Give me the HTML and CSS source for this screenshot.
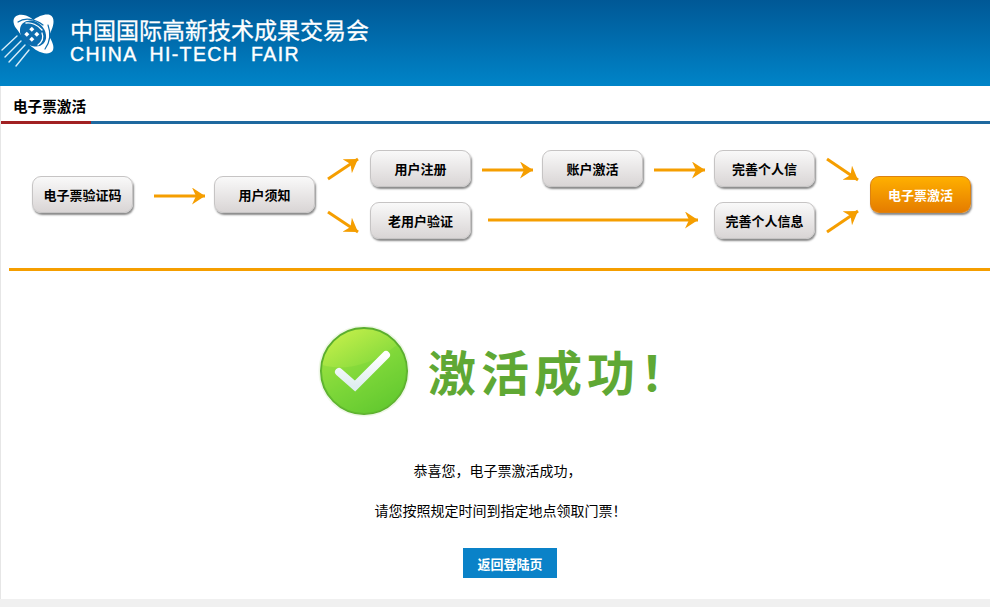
FILE: index.html
```html
<!DOCTYPE html>
<html lang="zh-CN">
<head>
<meta charset="utf-8">
<title>电子票激活</title>
<link rel="stylesheet" href="styles.css">
</head>
<body>
<header class="header">
  <svg class="logo" viewBox="0 0 66 70" width="66" height="70" aria-hidden="true">
    <path fill="#fff" d="M13.500 22C13 15 20 13.500 26 15.500 29 16.500 31.500 18.500 33.500 20 38 16.500 45 13.500 50 15 55 17 54 25 51.500 30 50.500 32.500 49.500 34.500 49 36 52 41 55 47 52.500 51 49.500 55 42 53.500 37 50.500 35 49.500 33.500 48 32 47L25 41 17.500 30C15 27.500 14 25 13.500 22Z"/>
    <ellipse cx="33" cy="33.500" rx="14.500" ry="11.500" transform="rotate(45 33 33.500)" fill="#0b6cae"/>
    <g fill="none" stroke="#0b6cae" stroke-linecap="round">
      <path stroke-width="1.200" d="M18 22C25 17 35 19 43 25"/>
      <path stroke-width="1.200" d="M48 25C51 33 50 42 45 49"/>
    </g>
    <g fill="none" stroke="#fff" stroke-linecap="round">
      <path stroke-width="1.300" d="M26 23C31 22 38 25 42 30"/>
      <path stroke-width="1.300" d="M42 33C44 38 42 42 38 45"/>
    </g>
    <g fill="#fff">
      <rect x="30" y="27.500" width="3.600" height="3.600" transform="rotate(45 31.800 29.300)"/>
      <rect x="30" y="37.500" width="3.600" height="3.600" transform="rotate(45 31.800 39.300)"/>
      <rect x="25" y="32.500" width="3.600" height="3.600" transform="rotate(45 26.800 34.300)"/>
      <rect x="35" y="32.500" width="3.600" height="3.600" transform="rotate(45 36.800 34.300)"/>
    </g>
    <g fill="none" stroke="#d5ecf8" stroke-width="1.400" stroke-linecap="round">
      <path d="M2 50 17 36"/>
      <path d="M5 57 21 41"/>
      <path d="M9 62 25 45"/>
      <path d="M16 66 29 50"/>
    </g>
  </svg>
  <div class="brand">
    <div class="brand-cn">中国国际高新技术成果交易会</div>
    <div class="brand-en">CHINA HI-TECH FAIR</div>
  </div>
</header>
<main class="main">
  <div class="tabs"><div class="tab">电子票激活</div></div>
  <section class="flow">
    <svg class="arrows" viewBox="0 0 989 144" width="989" height="144" aria-hidden="true">
      <defs>
        <marker id="head" markerUnits="userSpaceOnUse" markerWidth="14" markerHeight="18" refX="13" refY="8.500" orient="auto">
          <path d="M0 0 13 8.500 0 17 4 8.500z" fill="#f59e00"/>
        </marker>
      </defs>
      <g fill="none" stroke="#f59e00" stroke-width="3" marker-end="url(#head)">
        <path d="M153 72H204"/>
        <path d="M327 55 357 35"/>
        <path d="M327 88 357 108"/>
        <path d="M481 46H532"/>
        <path d="M653 46H704"/>
        <path d="M487 96H697"/>
        <path d="M826 35 857 56"/>
        <path d="M826 108 857 87"/>
      </g>
    </svg>
    <div class="node n1">电子票验证码</div>
    <div class="node n2">用户须知</div>
    <div class="node n3">用户注册</div>
    <div class="node n4">老用户验证</div>
    <div class="node n5">账户激活</div>
    <div class="node n6">完善个人信</div>
    <div class="node n7">完善个人信息</div>
    <div class="node n8 node-active">电子票激活</div>
  </section>
  <hr class="divider">
  <section class="result">
    <div class="hero">
      <svg class="check" viewBox="0 0 92 92" width="92" height="92" aria-hidden="true">
        <defs>
          <linearGradient id="disc" x1="0.150" y1="0.050" x2="0.700" y2="1">
            <stop offset="0" stop-color="#c4ef4a"/>
            <stop offset="0.550" stop-color="#84da3c"/>
            <stop offset="1" stop-color="#5cc42e"/>
          </linearGradient>
          <linearGradient id="mark" x1="0" y1="0" x2="0" y2="1">
            <stop offset="0" stop-color="#ffffff"/>
            <stop offset="1" stop-color="#dfeef0"/>
          </linearGradient>
        </defs>
        <circle cx="46" cy="46" r="45.500" fill="#eef7e6"/>
        <circle cx="46" cy="46" r="43" fill="url(#disc)" stroke="#5bae2e" stroke-width="2"/>
        <path d="M4 40C24 46 52 42 79 20 86 29 89 38 89 46 89 70 70 89 46 89 22 89 3 70 3 46Z" fill="#6fd034" opacity="0.350"/>
        <path d="M21 47 37 61 68 30" fill="none" stroke="url(#mark)" stroke-width="8" stroke-linecap="round" stroke-linejoin="miter"/>
      </svg>
      <h1 class="hero-title">激活成功！</h1>
    </div>
    <p class="msg msg-first">恭喜您，电子票激活成功，</p>
    <p class="msg msg-second">请您按照规定时间到指定地点领取门票！</p>
    <a class="back" href="#">返回登陆页</a>
  </section>
</main>
</body>
</html>
```
FILE: styles.css
```css
* { box-sizing: border-box; }
html, body { margin: 0; padding: 0; }
body {
  width: 990px;
  height: 607px;
  overflow: hidden;
  background: #f0f0f0;
  font-family: "Noto Sans CJK SC", "Liberation Sans", sans-serif;
  color: #000;
}
.header {
  height: 86px;
  display: flex;
  align-items: flex-start;
  background: linear-gradient(#005896, #0084c8);
}
.logo { flex: none; margin-right: 4px; display: block; }
.brand { padding-top: 15px; color: #fff; }
.brand-cn {
  font-size: 23px;
  line-height: 28px;
  white-space: nowrap;
  -webkit-text-stroke: 0.3px #fff;
}
.brand-en {
  font-family: "Liberation Sans", sans-serif;
  font-size: 19.500px;
  line-height: 22px;
  letter-spacing: 1.400px;
  word-spacing: 6px;
  white-space: nowrap;
  -webkit-text-stroke: 0.4px #fff;
}
.main {
  height: 513px;
  background: #fff;
  border-left: 1px solid #e6e6e6;
}
.tabs { height: 38px; border-bottom: 3px solid #1e689f; }
.tab {
  width: 90px;
  height: 38px;
  padding: 8px 0 0 12px;
  border-bottom: 3px solid #a12022;
  font-size: 14.600px;
  line-height: 24px;
  font-weight: 700;
  white-space: nowrap;
}
.flow { position: relative; height: 144px; }
.arrows { position: absolute; left: 0; top: 0; }
.node {
  position: absolute;
  width: 101px;
  height: 37px;
  display: flex;
  align-items: center;
  justify-content: center;
  border: 1px solid #c6c4c4;
  border-radius: 9px;
  background: linear-gradient(#f9f9f9, #d9d5d5);
  box-shadow: 1px 2px 2px #8a8a8a;
  font-size: 13px;
  font-weight: 700;
  white-space: nowrap;
}
.node-active {
  border-color: #dc8212;
  background: linear-gradient(#ffb000, #e57c00);
  color: #fff;
}
.n1 { left: 31px; top: 52px; }
.n2 { left: 213px; top: 52px; }
.n3 { left: 369px; top: 26px; }
.n4 { left: 369px; top: 78px; }
.n5 { left: 541px; top: 26px; }
.n6 { left: 713px; top: 26px; }
.n7 { left: 713px; top: 78px; }
.n8 { left: 869px; top: 52px; }
.divider {
  height: 3px;
  margin: 0 0 0 8px;
  border: 0;
  background: #f59e00;
}
.result {
  display: flex;
  flex-direction: column;
  align-items: center;
  padding-top: 54px;
}
.hero {
  display: flex;
  align-items: center;
  gap: 18px;
  margin-left: 20px;
  height: 92px;
}
.check { flex: none; display: block; }
.hero-title {
  margin: 0 0 2px;
  font-size: 48px;
  line-height: 60px;
  font-weight: 700;
  letter-spacing: 5px;
  color: #5fa834;
  white-space: nowrap;
}
.msg {
  margin: 0 0 20px 4px;
  font-size: 14px;
  line-height: 20px;
  white-space: nowrap;
}
.msg-first { margin-top: 43px; }
.msg-second { margin-left: 10px; }
.back {
  margin: 8px 0 0 29px;
  width: 94px;
  height: 30px;
  display: flex;
  align-items: center;
  justify-content: center;
  background: #0a82c8;
  color: #fff;
  font-size: 13px;
  font-weight: 700;
  text-decoration: none;
}
```
